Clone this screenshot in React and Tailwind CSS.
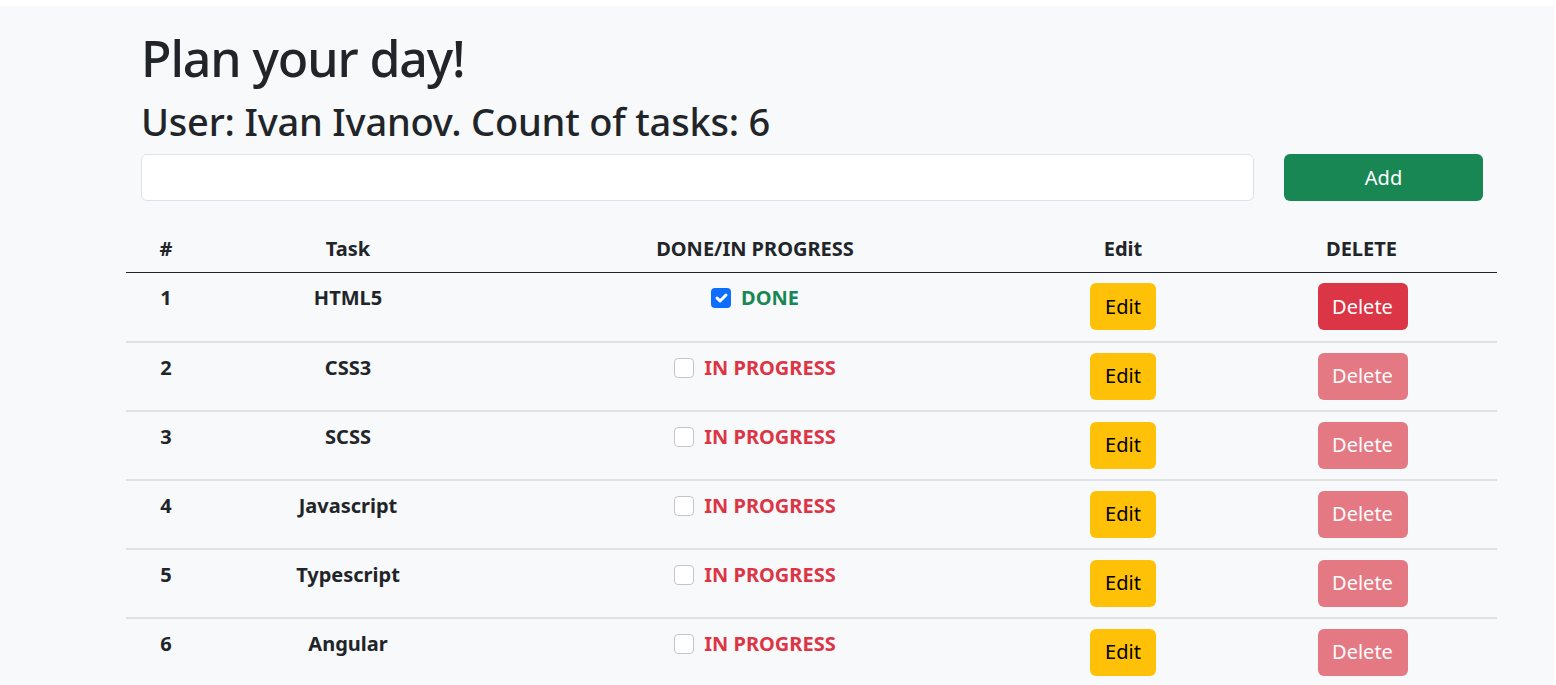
import React, { useState } from "react";

const initialTasks = [
  { id: 1, title: "HTML5", done: true },
  { id: 2, title: "CSS3", done: false },
  { id: 3, title: "SCSS", done: false },
  { id: 4, title: "Javascript", done: false },
  { id: 5, title: "Typescript", done: false },
  { id: 6, title: "Angular", done: false },
];

const CheckBox = ({ checked, onChange }) => (
  <button
    type="button"
    onClick={onChange}
    className={
      checked
        ? "w-[20px] h-[20px] rounded-[4px] bg-[#0d6efd] flex items-center justify-center"
        : "w-[20px] h-[20px] rounded-[4px] bg-white border border-[#c4c6c8]"
    }
  >
    {checked && (
      <svg width="20" height="20" viewBox="0 0 20 20">
        <path
          d="M6 10l3 3l6-6"
          fill="none"
          stroke="#fff"
          strokeWidth="3"
          strokeLinecap="round"
          strokeLinejoin="round"
        />
      </svg>
    )}
  </button>
);

const App = () => {
  const [tasks, setTasks] = useState(initialTasks);
  const [text, setText] = useState("");

  const toggle = (id) =>
    setTasks(tasks.map((t) => (t.id === id ? { ...t, done: !t.done } : t)));

  return (
    <div className="font-['Noto_Sans',sans-serif] text-[#212529] bg-white pt-[6px]">
      <div className="bg-[#f8f9fa] min-h-[679px] mr-[2px]">
        <div className="pl-[141px] pr-[70px] pt-[22px]">
          <h1 className="text-[50px] leading-[60px] font-medium tracking-[-1.1px] mb-[10px]">
            Plan your day!
          </h1>
          <h2 className="text-[38px] leading-[46px] font-medium tracking-[-0.2px] mb-[10px]">
            User: Ivan Ivanov. Count of tasks: {tasks.length}
          </h2>
          <div className="flex items-center">
            <input
              value={text}
              onChange={(e) => setText(e.target.value)}
              className="shrink-0 w-[1113px] h-[47px] bg-white border border-[#dee2e6] rounded-[6px] px-4 text-[20px] outline-none"
            />
            <button className="shrink-0 ml-[30px] w-[199px] h-[47px] rounded-[6px] bg-[#198754] text-white text-[20px]">
              Add
            </button>
          </div>
        </div>

        <table className="ml-[126px] mt-[24px] w-[1371px] table-fixed border-collapse text-[20px] leading-[30px]">
          <thead>
            <tr className="border-b border-[#212529]">
              <th className="w-[80px] pt-[9px] pb-[8px] font-bold">#</th>
              <th className="w-[284px] pt-[9px] pb-[8px] font-bold">Task</th>
              <th className="w-[530px] pt-[9px] pb-[8px] font-bold">DONE/IN PROGRESS</th>
              <th className="w-[206px] pt-[9px] pb-[8px] font-bold">Edit</th>
              <th className="w-[271px] pt-[9px] pb-[8px] font-bold">DELETE</th>
            </tr>
          </thead>
          <tbody>
            {tasks.map((task) => (
              <tr key={task.id} className="border-b-2 border-[#dee2e6] h-[69px]">
                <td className="align-top pt-[10px] text-center font-bold">{task.id}</td>
                <td className="align-top pt-[10px] text-center font-bold">{task.title}</td>
                <td className="align-top pt-[10px]">
                  <div className="flex items-center justify-center gap-[10px] h-[30px]">
                    <CheckBox checked={task.done} onChange={() => toggle(task.id)} />
                    <span
                      className={
                        task.done
                          ? "font-bold text-[#198754]"
                          : "font-bold text-[#dc3545]"
                      }
                    >
                      {task.done ? "DONE" : "IN PROGRESS"}
                    </span>
                  </div>
                </td>
                <td className="align-top pt-[10px] text-center">
                  <button className="w-[66px] h-[47px] rounded-[6px] bg-[#ffc107] text-black text-[20px]">
                    Edit
                  </button>
                </td>
                <td className="align-top pt-[10px] pl-[2px] text-center">
                  <button
                    disabled={!task.done}
                    className={
                      task.done
                        ? "w-[90px] h-[47px] rounded-[6px] bg-[#dc3545] text-white text-[20px]"
                        : "w-[90px] h-[47px] rounded-[6px] bg-[#dc3545] text-white text-[20px] opacity-65"
                    }
                  >
                    Delete
                  </button>
                </td>
              </tr>
            ))}
          </tbody>
        </table>
      </div>
    </div>
  );
};

export default App;
